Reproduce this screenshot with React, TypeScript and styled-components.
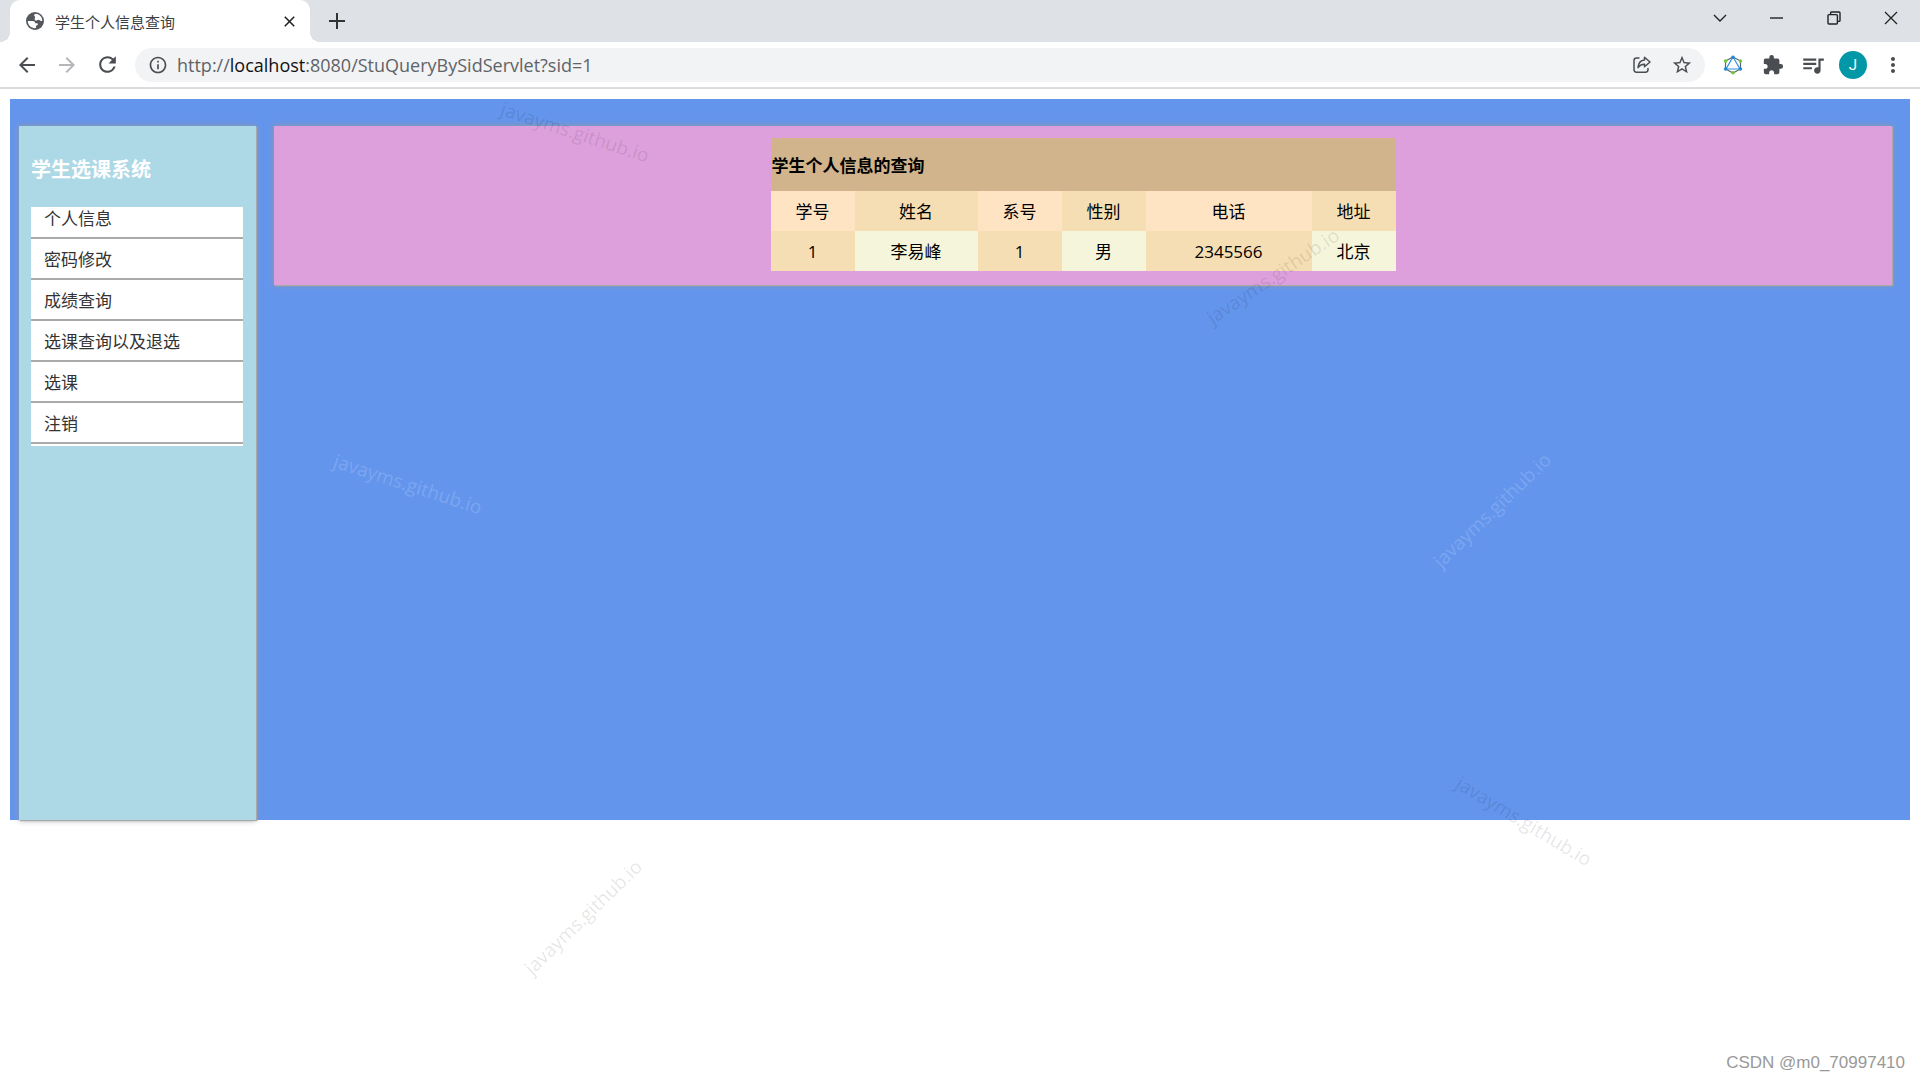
import React from "react";
import styled, { createGlobalStyle } from "styled-components";
import {
  MdArrowBack, MdArrowForward, MdRefresh, MdInfoOutline, MdStarBorder,
  MdExtension, MdQueueMusic, MdMoreVert,
} from "react-icons/md";

const GlobalStyle = createGlobalStyle`
  *, *::before, *::after { box-sizing: border-box; }
  body {
    margin: 0;
    background: #fff;
    font-family: "Open Sans", "Noto Sans CJK SC", sans-serif;
  }
`;

const Browser = styled.div`
  position: relative;
  display: flex;
  flex-direction: column;
  min-height: 100vh;
  overflow: hidden;
`;

const TabStrip = styled.header`
  display: flex;
  align-items: flex-end;
  height: 42px;
  padding-left: 10px;
  background: #dee1e6;
`;

const Tab = styled.div`
  position: relative;
  display: flex;
  align-items: center;
  gap: 9px;
  width: 300px;
  height: 42px;
  padding: 0 11px 0 14px;
  border-radius: 10px 10px 0 0;
  background: #fff;
  color: #3c4043;
  font-size: 15px;

  &::before, &::after {
    content: "";
    position: absolute;
    bottom: 0;
    width: 10px;
    height: 10px;
  }
  &::before {
    left: -10px;
    background: radial-gradient(circle at 0 0, transparent 10px, #fff 10px);
  }
  &::after {
    right: -10px;
    background: radial-gradient(circle at 100% 0, transparent 10px, #fff 10px);
  }
`;

const TabTitle = styled.span`
  flex: 1;
`;

const IconButton = styled.button<{ $width: number; $tone?: string }>`
  display: flex;
  flex: none;
  align-items: center;
  justify-content: center;
  width: ${(p) => p.$width}px;
  height: 36px;
  padding: 0;
  border: 0;
  background: none;
  color: ${(p) => p.$tone ?? "#4a4d51"};
`;

const NewTab = styled(IconButton)`
  height: 42px;
  margin-left: 7px;
`;

const WindowControls = styled.div`
  display: flex;
  align-self: flex-start;
  margin-left: auto;
  padding-right: 1px;
`;

const Toolbar = styled.nav`
  display: flex;
  align-items: center;
  height: 47px;
  padding: 0 7px;
  border-bottom: 2px solid #dadce0;
  background: #fff;
`;

const Omnibox = styled.div`
  display: flex;
  flex: 1;
  align-items: center;
  height: 34px;
  margin: 0 8px;
  padding: 0 3px 0 8px;
  border-radius: 17px;
  background: #f1f3f4;
`;

const Url = styled.a`
  flex: 1;
  margin-left: 4px;
  color: #5f6368;
  font-size: 18px;
  line-height: 24px;
  text-decoration: none;
`;

const Host = styled.span`
  color: #111;
`;

const Avatar = styled.span`
  display: grid;
  place-items: center;
  width: 28px;
  height: 28px;
  border-radius: 50%;
  background: #0097a7;
  color: #fff;
  font: 15px Roboto, sans-serif;
`;

const Page = styled.main`
  display: flex;
  align-items: flex-start;
  gap: 18px;
  min-height: 721px;
  margin: 10px 10px 0;
  padding: 27px 18px 0 9px;
  background: #6495ed;
`;

const Sidebar = styled.aside`
  align-self: stretch;
  width: 237px;
  padding: 30px 13px 0 12px;
  background: #add8e6;
  box-shadow: 1px 1px 1px #a9a9a9, 0 0 6px #999;
`;

const SystemName = styled.h1`
  margin: 0 0 23px;
  color: #fff;
  font-size: 20px;
  line-height: 28px;
`;

const Menu = styled.ul`
  margin: 0;
  padding: 0 0 2px;
  background: #fff;
  list-style: none;
`;

const MenuItem = styled.li`
  display: flex;
  align-items: flex-end;
  height: 41px;
  padding: 0 13px 5px;
  border-bottom: 2px solid #aaa;

  &:first-child {
    height: 32px;
  }
`;

const MenuLink = styled.a`
  color: #333;
  font-size: 17px;
  line-height: 26px;
  text-decoration: none;
`;

const Panel = styled.section`
  flex: 1;
  padding: 12px 12px 14px;
  background: #dda0dd;
  box-shadow: 1px 1px 1px #a9a9a9, 0 0 6px #999;
`;

const InfoTable = styled.table`
  width: 625px;
  margin: 0 auto;
  border-collapse: collapse;
  table-layout: fixed;
  color: #000;
  font-size: 17px;
  line-height: 24px;
`;

const Column = styled.col<{ $width: number }>`
  width: ${(p) => p.$width}px;
`;

const Heading = styled.caption`
  height: 53px;
  padding: 16px 1px 13px;
  background: #d2b48c;
  font-weight: 700;
  text-align: left;
`;

const HeadCell = styled.th`
  height: 40px;
  padding: 2px 0 0;
  background: #ffe4c4;
  font-weight: 400;

  &:nth-child(even) { background: #f5deb3; }
`;

const Cell = styled.td`
  height: 40px;
  padding: 2px 0 0;
  background: #f5deb3;
  text-align: center;

  &:nth-child(even) { background: #f5f5dc; }
`;

const Watermark = styled.span<{ $x: number; $y: number; $angle: number; $light?: boolean }>`
  position: absolute;
  left: ${(p) => p.$x}px;
  top: ${(p) => p.$y}px;
  color: ${(p) => (p.$light ? "rgba(255,255,255,.17)" : "rgba(0,0,0,.11)")};
  font-size: 19px;
  line-height: 24px;
  pointer-events: none;
  transform: translate(-50%, -50%) rotate(${(p) => p.$angle}deg);
`;

const Credit = styled.footer`
  margin-top: auto;
  padding: 0 15px 7px;
  color: #999;
  font: 17px/20px "Liberation Sans", sans-serif;
  text-align: right;
`;

const menu = ["个人信息", "密码修改", "成绩查询", "选课查询以及退选", "选课", "注销"];

const columns = [
  { label: "学号", value: "1", width: 84 },
  { label: "姓名", value: "李易峰", width: 123 },
  { label: "系号", value: "1", width: 84 },
  { label: "性别", value: "男", width: 84 },
  { label: "电话", value: "2345566", width: 166 },
  { label: "地址", value: "北京", width: 84 },
];

const watermarks = [
  { x: 575, y: 132, angle: 18 },
  { x: 408, y: 484, angle: 18, light: true },
  { x: 583, y: 917, angle: -44 },
  { x: 1492, y: 510, angle: -44, light: true },
  { x: 1524, y: 821, angle: 31 },
  { x: 1273, y: 276, angle: -34 },
];

const stroke = { fill: "none", stroke: "currentColor" } as const;

const GlobeIcon = () => (
  <svg width="22" height="22" viewBox="0 0 22 22">
    <circle cx="11" cy="11" r="9" fill="#54575c" />
    <path
      fill="#fff"
      d="M12 3.800c3.600.500 6.200 3.200 6.300 6.900-.900.500-1.900.300-2.600-.400-.700-.800-2-.700-2.700 0-.800.700-2.100.400-2.300-.700-.200-1.200.600-1.700.500-2.500-.100-.900-1.200-1-1.100-1.900.100-.700.900-1.200 1.900-1.400z"
    />
    <path
      fill="#fff"
      d="M3.800 11h4.800c1.500 0 2.600.900 2.600 2.200h1.900c.500 0 .800.400.800.900 0 1.200-.900 1.700-1.900 1.700v2.300c-4.600.600-8.200-2.700-8.200-7.100z"
    />
  </svg>
);

const CrossIcon = ({ size, width }: { size: number; width: number }) => (
  <svg width={size} height={size} viewBox="0 0 14 14" {...stroke} strokeWidth={width}>
    <path d="M1 1l12 12M13 1L1 13" />
  </svg>
);

const PlusIcon = () => (
  <svg width="16" height="16" viewBox="0 0 16 16" {...stroke} strokeWidth="2">
    <path d="M8 0v16M0 8h16" />
  </svg>
);

const ChevronIcon = () => (
  <svg width="14" height="8" viewBox="0 0 14 8" {...stroke} strokeWidth="1.4">
    <path d="M1 1l6 6 6-6" />
  </svg>
);

const MinimizeIcon = () => (
  <svg width="13" height="2" viewBox="0 0 13 2" {...stroke} strokeWidth="1.4">
    <path d="M0 1h13" />
  </svg>
);

const RestoreIcon = () => (
  <svg width="14" height="14" viewBox="0 0 14 14" {...stroke} strokeWidth="1.4">
    <rect x="1" y="3.6" width="9.4" height="9.4" rx="1" />
    <path d="M3.6 3.4V1.8Q3.6 1 4.4 1H12q1 0 1 1v7.4q0 1-1 1h-1.4" />
  </svg>
);

const RefreshIcon = () => <MdRefresh size={25} />;

const ShareIcon = () => (
  <svg width="18" height="18" viewBox="0 0 18 18" {...stroke} strokeWidth="1.5" strokeLinejoin="round">
    <path d="M6.500 2H3.500Q1 2 1 4.500v9Q1 16.200 3.500 16.200h9q2.500 0 2.500-2.700V12" />
    <path d="M11.500 1.200l5.500 4.800-5.500 4.800V8.200Q7.500 8 5 11.600 5.600 4.400 11.500 3.900z" />
  </svg>
);

const HexagonIcon = () => (
  <svg width="20" height="20" viewBox="0 0 20 20" fill="none">
    <path d="M10 2l7.500 4v8L10 18l-7.500-4V6z" stroke="#5c6670" strokeWidth="1.200" />
    <path d="M10 2l7 12H3z" stroke="#2f8fe0" strokeWidth="1.200" />
    <g fill="#1e88d8">
      <circle cx="10" cy="2.200" r="1.800" />
      <circle cx="2.600" cy="14" r="1.800" />
      <circle cx="17.400" cy="14" r="1.800" />
    </g>
    <g fill="#6cc832">
      <circle cx="2.600" cy="6" r="1.800" />
      <circle cx="17.400" cy="6" r="1.800" />
      <circle cx="10" cy="17.800" r="1.800" />
    </g>
  </svg>
);

export default function App() {
  return (
    <Browser>
      <GlobalStyle />
      <TabStrip>
        <Tab>
          <GlobeIcon />
          <TabTitle>学生个人信息查询</TabTitle>
          <IconButton $width={20} $tone="#222" aria-label="关闭标签页"><CrossIcon size={11} width={2} /></IconButton>
        </Tab>
        <NewTab $width={40} $tone="#333" aria-label="新标签页"><PlusIcon /></NewTab>
        <WindowControls>
          <IconButton $width={57} $tone="#222" aria-label="搜索标签页"><ChevronIcon /></IconButton>
          <IconButton $width={57} $tone="#222" aria-label="最小化"><MinimizeIcon /></IconButton>
          <IconButton $width={57} $tone="#222" aria-label="还原"><RestoreIcon /></IconButton>
          <IconButton $width={57} $tone="#222" aria-label="关闭"><CrossIcon size={14} width={1.3} /></IconButton>
        </WindowControls>
      </TabStrip>

      <Toolbar>
        <IconButton $width={40} aria-label="返回"><MdArrowBack size={24} /></IconButton>
        <IconButton $width={40} $tone="#b4b6b9" aria-label="前进"><MdArrowForward size={24} /></IconButton>
        <IconButton $width={40} aria-label="刷新"><RefreshIcon /></IconButton>
        <Omnibox>
          <IconButton $width={30} aria-label="网站信息"><MdInfoOutline size={20} /></IconButton>
          <Url href="#">http://<Host>localhost</Host>:8080/StuQueryBySidServlet?sid=1</Url>
          <IconButton $width={40} aria-label="分享"><ShareIcon /></IconButton>
          <IconButton $width={40} aria-label="收藏"><MdStarBorder size={22} /></IconButton>
        </Omnibox>
        <IconButton $width={40} aria-label="扩展"><HexagonIcon /></IconButton>
        <IconButton $width={40} aria-label="扩展程序"><MdExtension size={22} /></IconButton>
        <IconButton $width={40} aria-label="媒体"><MdQueueMusic size={26} /></IconButton>
        <IconButton $width={40} aria-label="个人资料"><Avatar>J</Avatar></IconButton>
        <IconButton $width={40} aria-label="菜单"><MdMoreVert size={24} /></IconButton>
      </Toolbar>

      <Page>
        <Sidebar>
          <SystemName>学生选课系统</SystemName>
          <Menu>
            {menu.map((label) => (
              <MenuItem key={label}><MenuLink href="#">{label}</MenuLink></MenuItem>
            ))}
          </Menu>
        </Sidebar>
        <Panel>
          <InfoTable>
            <Heading>学生个人信息的查询</Heading>
            <colgroup>
              {columns.map((c) => <Column key={c.label} $width={c.width} />)}
            </colgroup>
            <thead>
              <tr>{columns.map((c) => <HeadCell key={c.label} scope="col">{c.label}</HeadCell>)}</tr>
            </thead>
            <tbody>
              <tr>{columns.map((c) => <Cell key={c.label}>{c.value}</Cell>)}</tr>
            </tbody>
          </InfoTable>
        </Panel>
      </Page>

      {watermarks.map((w) => (
        <Watermark key={`${w.x}-${w.y}`} $x={w.x} $y={w.y} $angle={w.angle} $light={w.light}>
          javayms.github.io
        </Watermark>
      ))}
      <Credit>CSDN @m0_70997410</Credit>
    </Browser>
  );
}
